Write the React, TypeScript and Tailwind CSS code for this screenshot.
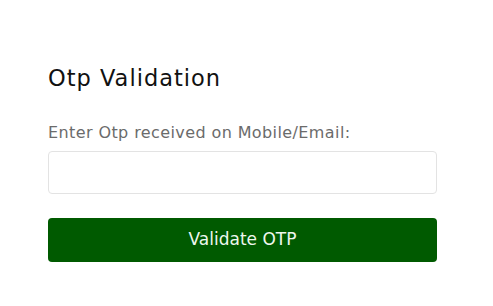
export default function App() {
  return (
    <div className="min-h-screen bg-white pl-[48px] pr-[56px] pt-[62px] font-['DejaVu_Sans',sans-serif]">
      <h2 className="text-[22.5px] leading-[33px] font-normal tracking-[1px] text-[#111]">Otp Validation</h2>
      <label className="mt-[27px] block text-[16px] leading-[22px] tracking-[0.4px] text-[#6b6b6b]">
        Enter Otp received on Mobile/Email:
      </label>
      <input
        type="text"
        className="mt-[7px] block h-[43px] w-full rounded-[4px] border border-[#e3e3e3] bg-white px-3 outline-none"
      />
      <button
        type="button"
        className="mt-[24px] flex h-[44px] w-full items-center justify-center rounded-[4px] bg-[#005a00] text-[17px] text-[#eef7ee]"
      >
        Validate OTP
      </button>
    </div>
  );
}
